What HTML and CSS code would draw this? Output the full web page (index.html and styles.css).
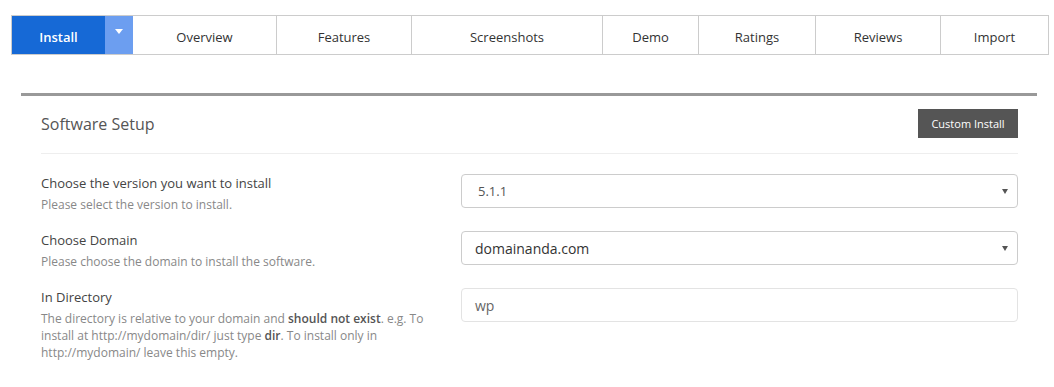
FILE: index.html
```html
<!DOCTYPE html>
<html lang="en">
<head>
  <meta charset="UTF-8">
  <title>Software Install</title>
  <link rel="stylesheet" href="styles.css">
</head>
<body>
<div class="tabs">
  <div class="tab tab-install">Install</div>
  <div class="tab tab-caret">
    <svg width="8" height="5" viewBox="0 0 8 5"><path d="M0 0h8L4 5z" fill="#fff"/></svg>
  </div>
  <div class="tab tab-overview">Overview</div>
  <div class="tab tab-features">Features</div>
  <div class="tab tab-screenshots">Screenshots</div>
  <div class="tab tab-demo">Demo</div>
  <div class="tab tab-ratings">Ratings</div>
  <div class="tab tab-reviews">Reviews</div>
  <div class="tab tab-import">Import</div>
</div>

<div class="panel">
  <div class="panel-head">
    <div class="panel-title">Software Setup</div>
    <button class="btn-custom">Custom Install</button>
  </div>

  <div class="row">
    <div class="info">
      <div class="label">Choose the version you want to install</div>
      <div class="desc">Please select the version to install.</div>
    </div>
    <div class="select select-version">
      <span>5.1.1</span>
      <svg width="6" height="5" viewBox="0 0 6 5"><path d="M0 0h6L3 5z" fill="#555"/></svg>
    </div>
  </div>

  <div class="row">
    <div class="info">
      <div class="label">Choose Domain</div>
      <div class="desc">Please choose the domain to install the software.</div>
    </div>
    <div class="select select-domain">
      <span>domainanda.com</span>
      <svg width="6" height="5" viewBox="0 0 6 5"><path d="M0 0h6L3 5z" fill="#555"/></svg>
    </div>
  </div>

  <div class="row">
    <div class="info">
      <div class="label">In Directory</div>
      <div class="desc">The directory is relative to your domain and <b>should not exist</b>. e.g. To install at http://mydomain/dir/ just type <b>dir</b>. To install only in http://mydomain/ leave this empty.</div>
    </div>
    <div class="text-input">wp</div>
  </div>
</div>
</body>
</html>
```

FILE: styles.css
```css
body { margin: 0; background: #fff; color: #333; font-family: "Open Sans", Arial, sans-serif; }

.tabs { display: flex; width: 1036px; height: 38px; margin: 15px 0 0 11px; border: 1px solid #ccc; }
.tab { box-sizing: border-box; display: flex; align-items: center; justify-content: center; padding-top: 3px; border-left: 1px solid #ccc; font-size: 13px; color: #333; }
.tab-install { width: 93px; border-left: none; background: #1669d6; color: #fff; font-weight: 600; }
.tab-caret { width: 28px; border-left: none; background: #6c9ef0; padding: 0 0 7px; }
.tab-overview { width: 143px; border-left: none; }
.tab-features { width: 135px; }
.tab-screenshots { width: 191px; }
.tab-demo { width: 96px; }
.tab-ratings { width: 117px; }
.tab-reviews { width: 125px; }
.tab-import { width: 108px; }

.panel { width: 977px; margin: 38px 0 0 21px; padding: 0 19px 0 20px; border-top: 3px solid #999; background: #fff; }
.panel-head { display: flex; align-items: center; justify-content: space-between; padding: 13px 0 15px; border-bottom: 1px solid #eee; }
.panel-title { font-size: 16px; color: #555; }
.btn-custom { width: 100px; height: 29px; border: none; border-radius: 0; background: #555; color: #fff; font-family: inherit; font-size: 11px; padding: 0; }

.row { display: grid; grid-template-columns: 400px 557px; column-gap: 20px; align-items: start; margin-top: 20px; }
.row + .row { margin-top: 18px; }
.label { font-size: 13px; line-height: 18px; font-weight: 500; color: #444; }
.desc { margin-top: 4px; font-size: 12px; line-height: 17px; color: #888; }
.desc b { font-weight: 600; color: #555; }

.select { box-sizing: border-box; display: flex; align-items: center; justify-content: space-between; height: 34px; padding: 0 9px 0 16px; border: 1px solid #ccc; border-radius: 4px; }
.select-version { font-size: 13px; color: #555; }
.select-domain { padding-left: 13px; font-size: 14px; color: #333; }
.text-input { box-sizing: border-box; display: flex; align-items: center; height: 34px; padding: 0 13px; border: 1px solid #e3e3e3; border-radius: 4px; font-size: 14px; color: #666; }
```
